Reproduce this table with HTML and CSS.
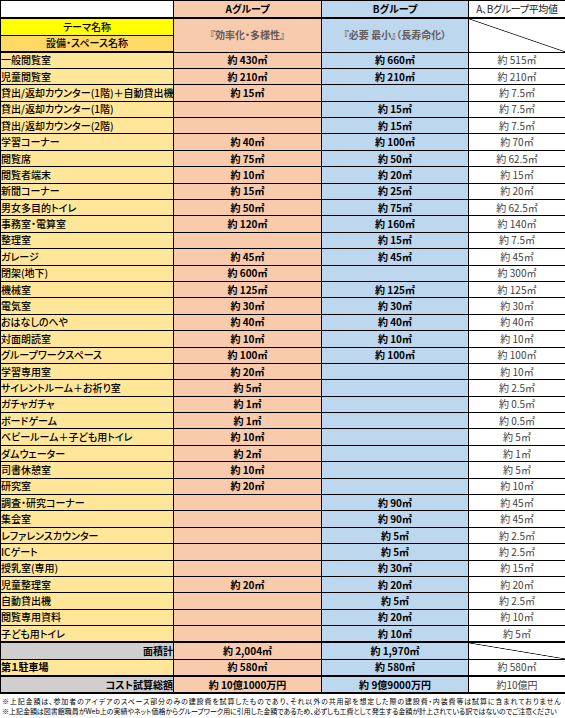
FILE: index.html
```html
<!DOCTYPE html>
<html lang="ja">
<head>
<meta charset="utf-8">
<title>スペース比較表</title>
<link rel="stylesheet" href="styles.css">
</head>
<body>
<table class="sheet">
<colgroup><col class="c-name"><col class="c-a"><col class="c-b"><col class="c-avg"></colgroup>
<thead>
<tr class="h-top"><th class="blank"></th><th class="a grp">Aグループ</th><th class="b grp">Bグループ</th><th class="avg-h">A、Bグループ平均値</th></tr>
<tr class="h-mid"><th class="theme">テーマ名称</th><th class="a concept" rowspan="2">『効率化・多様性』</th><th class="b concept" rowspan="2">『必要 最小』（長寿命化）</th><th class="diag concept-end" rowspan="2"></th></tr>
<tr class="h-bot"><th class="facility">設備・スペース名称</th></tr>
</thead>
<tbody>
<tr><td class="name">一般閲覧室</td><td class="a">約 430㎡</td><td class="b">約 660㎡</td><td class="avg">約 515㎡</td></tr>
<tr><td class="name">児童閲覧室</td><td class="a">約 210㎡</td><td class="b">約 210㎡</td><td class="avg">約 210㎡</td></tr>
<tr><td class="name">貸出/返却カウンター(1階)＋自動貸出機</td><td class="a">約 15㎡</td><td class="b"></td><td class="avg">約 7.5㎡</td></tr>
<tr><td class="name">貸出/返却カウンター(1階)</td><td class="a"></td><td class="b">約 15㎡</td><td class="avg">約 7.5㎡</td></tr>
<tr><td class="name">貸出/返却カウンター(2階)</td><td class="a"></td><td class="b">約 15㎡</td><td class="avg">約 7.5㎡</td></tr>
<tr><td class="name">学習コーナー</td><td class="a">約 40㎡</td><td class="b">約 100㎡</td><td class="avg">約 70㎡</td></tr>
<tr><td class="name">閲覧席</td><td class="a">約 75㎡</td><td class="b">約 50㎡</td><td class="avg">約 62.5㎡</td></tr>
<tr><td class="name">閲覧者端末</td><td class="a">約 10㎡</td><td class="b">約 20㎡</td><td class="avg">約 15㎡</td></tr>
<tr><td class="name">新聞コーナー</td><td class="a">約 15㎡</td><td class="b">約 25㎡</td><td class="avg">約 20㎡</td></tr>
<tr><td class="name">男女多目的トイレ</td><td class="a">約 50㎡</td><td class="b">約 75㎡</td><td class="avg">約 62.5㎡</td></tr>
<tr><td class="name">事務室・電算室</td><td class="a">約 120㎡</td><td class="b">約 160㎡</td><td class="avg">約 140㎡</td></tr>
<tr><td class="name">整理室</td><td class="a"></td><td class="b">約 15㎡</td><td class="avg">約 7.5㎡</td></tr>
<tr><td class="name">ガレージ</td><td class="a">約 45㎡</td><td class="b">約 45㎡</td><td class="avg">約 45㎡</td></tr>
<tr><td class="name">閉架(地下)</td><td class="a">約 600㎡</td><td class="b"></td><td class="avg">約 300㎡</td></tr>
<tr><td class="name">機械室</td><td class="a">約 125㎡</td><td class="b">約 125㎡</td><td class="avg">約 125㎡</td></tr>
<tr><td class="name">電気室</td><td class="a">約 30㎡</td><td class="b">約 30㎡</td><td class="avg">約 30㎡</td></tr>
<tr><td class="name">おはなしのへや</td><td class="a">約 40㎡</td><td class="b">約 40㎡</td><td class="avg">約 40㎡</td></tr>
<tr><td class="name">対面朗読室</td><td class="a">約 10㎡</td><td class="b">約 10㎡</td><td class="avg">約 10㎡</td></tr>
<tr><td class="name">グループワークスペース</td><td class="a">約 100㎡</td><td class="b">約 100㎡</td><td class="avg">約 100㎡</td></tr>
<tr><td class="name">学習専用室</td><td class="a">約 20㎡</td><td class="b"></td><td class="avg">約 10㎡</td></tr>
<tr><td class="name">サイレントルーム＋お祈り室</td><td class="a">約 5㎡</td><td class="b"></td><td class="avg">約 2.5㎡</td></tr>
<tr><td class="name">ガチャガチャ</td><td class="a">約 1㎡</td><td class="b"></td><td class="avg">約 0.5㎡</td></tr>
<tr><td class="name">ボードゲーム</td><td class="a">約 1㎡</td><td class="b"></td><td class="avg">約 0.5㎡</td></tr>
<tr><td class="name">ベビールーム＋子ども用トイレ</td><td class="a">約 10㎡</td><td class="b"></td><td class="avg">約 5㎡</td></tr>
<tr><td class="name">ダムウェーター</td><td class="a">約 2㎡</td><td class="b"></td><td class="avg">約 1㎡</td></tr>
<tr><td class="name">司書休憩室</td><td class="a">約 10㎡</td><td class="b"></td><td class="avg">約 5㎡</td></tr>
<tr><td class="name">研究室</td><td class="a">約 20㎡</td><td class="b"></td><td class="avg">約 10㎡</td></tr>
<tr><td class="name">調査・研究コーナー</td><td class="a"></td><td class="b">約 90㎡</td><td class="avg">約 45㎡</td></tr>
<tr><td class="name">集会室</td><td class="a"></td><td class="b">約 90㎡</td><td class="avg">約 45㎡</td></tr>
<tr><td class="name">レファレンスカウンター</td><td class="a"></td><td class="b">約 5㎡</td><td class="avg">約 2.5㎡</td></tr>
<tr><td class="name">ICゲート</td><td class="a"></td><td class="b">約 5㎡</td><td class="avg">約 2.5㎡</td></tr>
<tr><td class="name">授乳室(専用)</td><td class="a"></td><td class="b">約 30㎡</td><td class="avg">約 15㎡</td></tr>
<tr><td class="name">児童整理室</td><td class="a">約 20㎡</td><td class="b">約 20㎡</td><td class="avg">約 20㎡</td></tr>
<tr><td class="name">自動貸出機</td><td class="a"></td><td class="b">約 5㎡</td><td class="avg">約 2.5㎡</td></tr>
<tr><td class="name">閲覧専用資料</td><td class="a"></td><td class="b">約 20㎡</td><td class="avg">約 10㎡</td></tr>
<tr><td class="name">子ども用トイレ</td><td class="a"></td><td class="b">約 10㎡</td><td class="avg">約 5㎡</td></tr>
</tbody>
<tfoot>
<tr class="sum"><td class="name total">面積計</td><td class="a big">約 2,004㎡</td><td class="b big">約 1,970㎡</td><td class="diag"></td></tr>
<tr class="parking"><td class="name bold">第１駐車場</td><td class="a big">約 580㎡</td><td class="b big">約 580㎡</td><td class="avg">約 580㎡</td></tr>
<tr class="cost"><td class="name total">コスト試算総額</td><td class="a big">約 10億1000万円</td><td class="b big">約 9億9000万円</td><td class="avg">約10億円</td></tr>
</tfoot>
</table>
<div class="notes">
<p class="note n1">※上記金額は、参加者のアイデアのスペース部分のみの建設費を試算したものであり、それ以外の共用部を想定した際の建設費・内装費等は試算に含まれておりません</p>
<p class="note n2">※上記金額は図書館職員がWeb上の実績やネット価格からグループワーク用に引用した金額であるため、必ずしも工費として発生する金額が計上されている訳ではないのでご注意ください</p>
</div>
</body>
</html>
```

FILE: styles.css
```css
html, body {
  margin: 0;
  padding: 0;
  background: #fff;
}
body {
  width: 565px;
  font-family: "Noto Sans CJK JP", "Noto Sans", sans-serif;
  color: #000;
  font-feature-settings: "palt";
}
.sheet {
  width: 565px;
  border-collapse: collapse;
  table-layout: fixed;
}
.c-name { width: 173px; }
.c-a { width: 148px; }
.c-b { width: 147px; }
.c-avg { width: 97px; }

.sheet th, .sheet td {
  border: 1px solid #000;
  padding: 0;
  white-space: nowrap;
  overflow: hidden;
  line-height: 14px;
  font-size: 10px;
}
.sheet tbody tr { height: 16.4px; }
.h-top { height: 17.5px; }
.h-mid { height: 17px; }
.h-bot { height: 17px; }
.sum, .parking, .cost { height: 17px; }

.h-top th { border-bottom-width: 2px; }
.h-bot th, .concept, .concept-end { border-bottom-width: 2px; }
.facility { border-right-width: 2px; }

.blank { background: #fff; }
.a { background: #f8cbad; text-align: center; font-weight: 700; font-size: 10.5px; }
.b { background: #bdd7ee; text-align: center; font-weight: 700; font-size: 10.5px; }
.grp { font-size: 11px; font-weight: 700; }
.avg-h {
  background: #fff;
  font-weight: 400;
  font-size: 8.5px;
  letter-spacing: -0.3px;
  color: #222;
  text-align: center;
}
.theme {
  background: #ffff00;
  font-weight: 500;
  font-size: 11px;
  text-align: center;
}
.facility {
  background: #ffd966;
  font-weight: 500;
  font-size: 11px;
  text-align: center;
}
.concept {
  color: #665d5d;
  font-size: 10.5px;
  font-weight: 700;
}
.diag {
  background: #fff linear-gradient(to top right, transparent calc(50% - 0.7px), #000 50%, transparent calc(50% + 0.7px));
}
.name {
  background: #ffe699;
  text-align: left;
  padding-left: 3px;
  font-size: 10px;
  font-weight: 500;
}
.avg {
  background: #fff;
  text-align: center;
  color: #404040;
  font-weight: 400;
  font-size: 10px;
}
.bold { font-weight: 700; font-size: 10.5px; }
.total {
  background: #d0cece;
  text-align: right;
  padding-right: 3px;
  font-weight: 700;
  font-size: 11px;
}
.big { font-size: 11.5px; }
.sum td { border-top-width: 2px; }
.cost td { border-top-width: 2px; border-bottom-width: 2px; }

.notes {
  padding: 2px 0 0 2px;
}
.note {
  margin: 0;
  white-space: nowrap;
  line-height: 10px;
  font-size: 7px;
  color: #000;
}
.n1 { letter-spacing: 0.85px; }
.n2 { letter-spacing: -0.03px; }
```
